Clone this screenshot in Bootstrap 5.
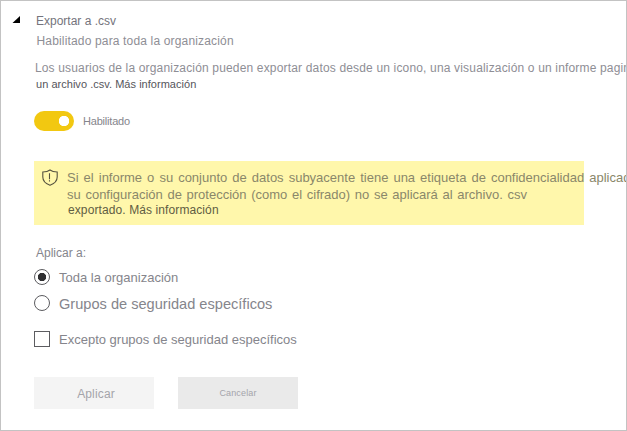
<!DOCTYPE html>
<html lang="es">
<head>
<meta charset="utf-8">
<meta name="viewport" content="width=device-width, initial-scale=1">
<title>Exportar a .csv</title>
<link href="https://cdn.jsdelivr.net/npm/bootstrap@5.3.0/dist/css/bootstrap.min.css" rel="stylesheet">
<style>
  body { font: 12px/16px "Liberation Sans", Arial, sans-serif; color: #85858c; background: #fff; }
  .panel { height: 431px; border: 1px solid #c3c3c3; padding: 12px 0 0 11px; }
  .caret { width: 8px; height: 7px; margin-top: 3px; }
  .setting { padding-left: 14px; }
  .setting-title { color: #74747c; padding-left: 2px; }
  .status { color: #8e8e95; letter-spacing: .16px; margin: 4px 0 11px; padding-left: 2.5px; }
  .desc { color: #8e8e95; letter-spacing: .166px; padding-left: .9px; }
  .desc-more { color: #55555b; font-size: 11px; letter-spacing: .03px; padding-left: 2px; }
  .switch { margin-top: 19px; gap: 9px; font-size: 11px; letter-spacing: -.2px; }
  .form-check-input.switch-input { width: 40px; height: 20px; margin: 0; border: 0; border-radius: 10px; background: #f2c811 radial-gradient(circle at 30px 10px, #fff 4.9px, transparent 5.5px); box-shadow: none; }
  .notice { width: 550px; height: 64px; margin: 30px 0 0; padding: 8px 0 0 8px; gap: 9px; border: 0; border-radius: 0; background: #fff7ab; color: #8a876a; font-size: 13px; line-height: 17px; }
  .notice p { margin: 0; }
  .notice-a { word-spacing: 1.42px; }
  .notice-b { word-spacing: 1.06px; }
  .notice-c { font-size: 12px; line-height: 14px; letter-spacing: .1px; color: #5f5d43; padding-left: 1px; }
  .apply-label { margin-top: 20px; padding-left: 2px; }
  .choice { gap: 9px; font-size: 13px; min-height: 17px; margin: 0; padding: 0; }
  .choice span { padding-top: 1px; }
  .choice .form-check-input { width: 16px; height: 16px; margin: 0; float: none; border: 1px solid #5c5c60; background-color: #fff; }
  .choice .form-check-input[type=checkbox] { border-radius: 0; }
  .choice .form-check-input[type=radio]:checked { background: #fff radial-gradient(circle, #2e2e30 3.8px, transparent 4.5px); }
  .choice-groups { margin-top: 9px; font-size: 14.6px; }
  .choice-except { margin-top: 19px; }
  .actions { gap: 24px; margin-top: 29px; }
  .actions .btn { width: 120px; height: 32px; padding: 0; border: 0; border-radius: 0; font-size: 12px; line-height: 16px; color: #a4a4aa; }
  .actions .btn-apply { background: #f4f4f4; letter-spacing: .15px; padding: 2px 0 0 4px; }
  .actions .btn-cancel { background: #eaeaea; font-size: 9px; letter-spacing: .15px; }
</style>
</head>
<body>
<main class="panel d-flex align-items-start overflow-hidden">
  <svg class="caret flex-shrink-0" viewBox="0 0 8 7" preserveAspectRatio="none"><path d="M8 0V7H.5Z" fill="#000"/></svg>
  <section class="setting text-nowrap">
    <div class="setting-title">Exportar a .csv</div>
    <div class="status">Habilitado para toda la organización</div>
    <div class="desc">Los usuarios de la organización pueden exportar datos desde un icono, una visualización o un informe pagin</div>
    <div class="desc-more">un archivo .csv. Más información</div>

    <label class="switch d-flex align-items-center">
      <input class="form-check-input switch-input" type="checkbox" role="switch" checked>
      <span>Habilitado</span>
    </label>

    <div class="notice alert d-flex align-items-start" role="alert">
      <svg class="flex-shrink-0" width="16" height="17" viewBox="0 0 16 17" fill="none" stroke="#55523f" stroke-width="1.1"><path d="M8 1C6.2 2.4 3.8 3 .8 3V8C.8 11.6 3.2 14.5 8 16.3C12.8 14.5 15.2 11.6 15.2 8V3C12.2 3 9.8 2.4 8 1Z"/><path d="M7.5 4.2V10.2M7.5 11.2V12.4"/></svg>
      <div>
        <p class="notice-a">Si el informe o su conjunto de datos subyacente tiene una etiqueta de confidencialidad aplicad</p>
        <p class="notice-b">su configuración de protección (como el cifrado) no se aplicará al archivo. csv</p>
        <p class="notice-c">exportado. Más información</p>
      </div>
    </div>

    <div class="apply-label">Aplicar a:</div>
    <label class="choice form-check d-flex align-items-start mt-2">
      <input class="form-check-input" type="radio" name="scope" checked><span>Toda la organización</span>
    </label>
    <label class="choice choice-groups form-check d-flex align-items-start">
      <input class="form-check-input" type="radio" name="scope"><span>Grupos de seguridad específicos</span>
    </label>
    <label class="choice choice-except form-check d-flex align-items-start">
      <input class="form-check-input" type="checkbox"><span>Excepto grupos de seguridad específicos</span>
    </label>

    <div class="actions d-flex">
      <button type="button" class="btn btn-apply">Aplicar</button>
      <button type="button" class="btn btn-cancel">Cancelar</button>
    </div>
  </section>
</main>
</body>
</html>
